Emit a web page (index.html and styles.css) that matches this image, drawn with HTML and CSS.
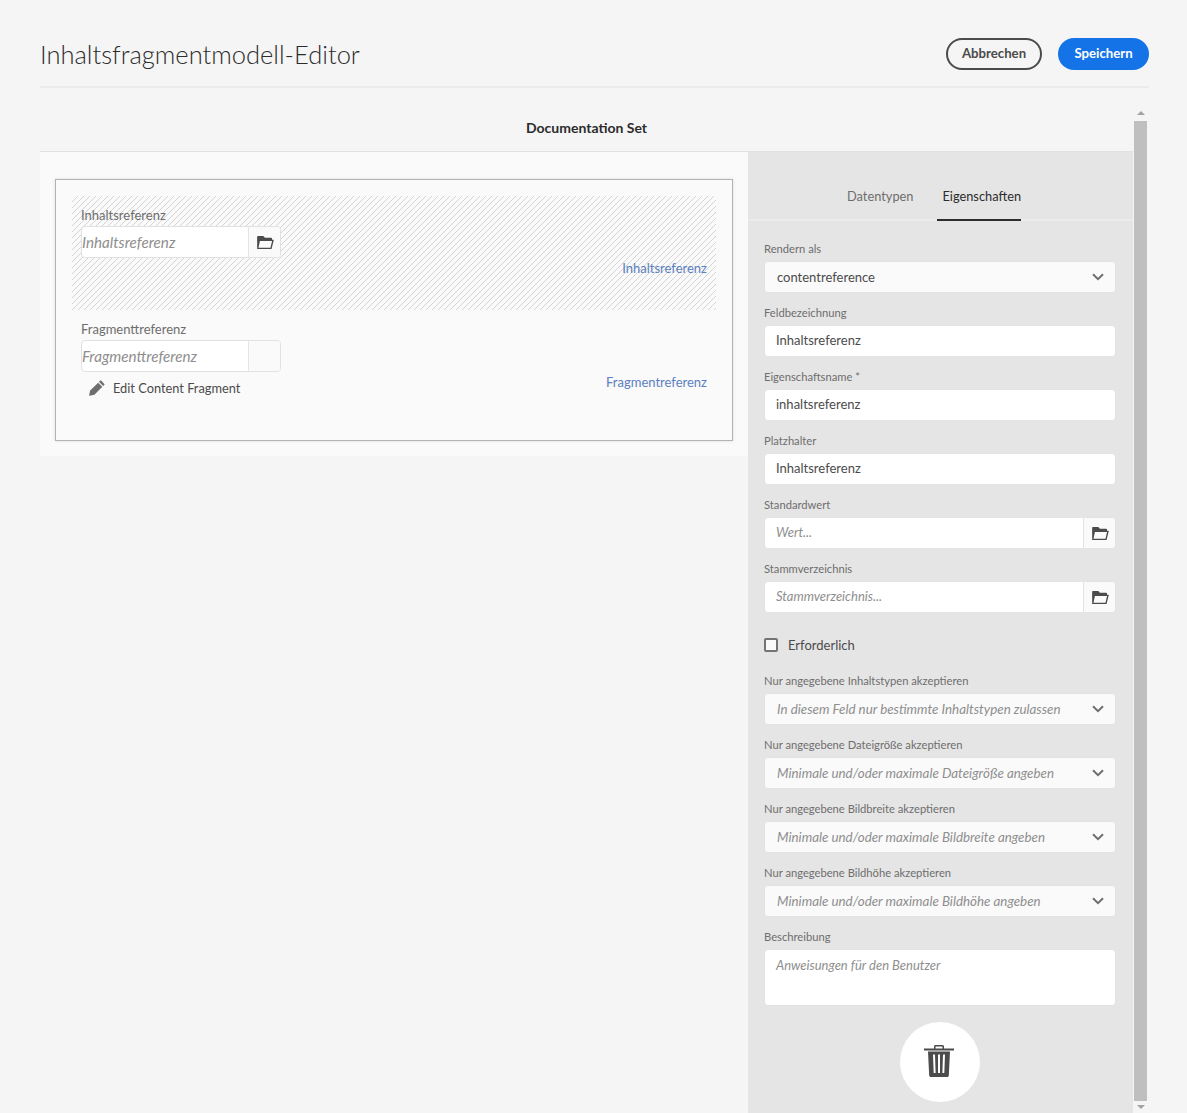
FILE: index.html
```html
<!DOCTYPE html>
<html lang="de">
<head>
    <meta charset="UTF-8">
    <title>Inhaltsfragmentmodell-Editor</title>
    <link rel="stylesheet" href="styles.css">
</head>
<body>
    <svg class="defs" width="0" height="0">
        <symbol id="folder" viewBox="0 0 18 14">
            <path fill="#4b4b4b" d="M0 .8C0 .3.3 0 .8 0h5.400c.3 0 .5.1.7.3L8.400 2H15.200c.5 0 .8.3.8.8V4.500H0z"/>
            <path fill="#4b4b4b" fill-rule="evenodd" d="M0 4h18L15.500 14H0zm3 1.500L1.400 12.600h12.900l1.800-7.100z"/>
        </symbol>
        <symbol id="chevron" viewBox="0 0 12 8">
            <path fill="none" stroke="#6e6e6e" stroke-width="2" d="M1 1.200l5 5 5-5"/>
        </symbol>
    </svg>

    <header class="kopf">
        <h1 class="titel">Inhaltsfragmentmodell-Editor</h1>
        <div class="aktionen">
            <button class="btn btn-abbrechen">Abbrechen</button>
            <button class="btn btn-speichern">Speichern</button>
        </div>
    </header>

    <div class="arbeitsflaeche">
        <main class="inhalt">
            <div class="modellname">Documentation Set</div>
            <div class="spalten">
                <section class="modell">
                    <div class="modell-rahmen">
                        <div class="zeile zeile-aktiv">
                            <div>
                                <label class="zeile-label">Inhaltsreferenz</label>
                                <div class="pfad">
                                    <span class="pfad-text">Inhaltsreferenz</span>
                                    <span class="pfad-btn"><svg width="17" height="13"><use href="#folder"/></svg></span>
                                </div>
                            </div>
                            <a class="zeile-typ">Inhaltsreferenz</a>
                        </div>
                        <div class="zeile">
                            <div>
                                <label class="zeile-label">Fragmenttreferenz</label>
                                <div class="pfad">
                                    <span class="pfad-text">Fragmenttreferenz</span>
                                    <span class="pfad-btn"></span>
                                </div>
                                <div class="bearbeiten">
                                    <svg width="16" height="16" viewBox="0 0 18 18"><path fill="#6e6e6e" d="M13.600.7l3.700 3.700c.3.3.3.7 0 1L15.900 6.800 11.200 2.100 12.600.7c.3-.3.7-.3 1 0zM10.300 3l4.700 4.700-8.900 8.900-5.500 1.200c-.3 0-.5-.2-.5-.5l1.200-5.400z"/></svg>
                                    <span>Edit Content Fragment</span>
                                </div>
                            </div>
                            <a class="zeile-typ">Fragmentreferenz</a>
                        </div>
                    </div>
                </section>

                <aside class="seite">
                    <nav class="tabs">
                        <a class="tab">Datentypen</a>
                        <a class="tab tab-aktiv">Eigenschaften</a>
                    </nav>
                    <form class="felder">
                        <div class="feld">
                            <label>Rendern als</label>
                            <div class="auswahl"><span>contentreference</span><svg width="12" height="8"><use href="#chevron"/></svg></div>
                        </div>
                        <div class="feld">
                            <label>Feldbezeichnung</label>
                            <div class="eingabe">Inhaltsreferenz</div>
                        </div>
                        <div class="feld">
                            <label>Eigenschaftsname *</label>
                            <div class="eingabe">inhaltsreferenz</div>
                        </div>
                        <div class="feld">
                            <label>Platzhalter</label>
                            <div class="eingabe">Inhaltsreferenz</div>
                        </div>
                        <div class="feld">
                            <label>Standardwert</label>
                            <div class="gruppe">
                                <div class="eingabe leer">Wert...</div>
                                <span class="gruppe-btn"><svg width="17" height="13"><use href="#folder"/></svg></span>
                            </div>
                        </div>
                        <div class="feld">
                            <label>Stammverzeichnis</label>
                            <div class="gruppe">
                                <div class="eingabe leer">Stammverzeichnis...</div>
                                <span class="gruppe-btn"><svg width="17" height="13"><use href="#folder"/></svg></span>
                            </div>
                        </div>
                        <div class="haken">
                            <span class="haken-box"></span>
                            <span>Erforderlich</span>
                        </div>
                        <div class="feld">
                            <label>Nur angegebene Inhaltstypen akzeptieren</label>
                            <div class="auswahl leer"><span>In diesem Feld nur bestimmte Inhaltstypen zulassen</span><svg width="12" height="8"><use href="#chevron"/></svg></div>
                        </div>
                        <div class="feld">
                            <label>Nur angegebene Dateigröße akzeptieren</label>
                            <div class="auswahl leer"><span>Minimale und/oder maximale Dateigröße angeben</span><svg width="12" height="8"><use href="#chevron"/></svg></div>
                        </div>
                        <div class="feld">
                            <label>Nur angegebene Bildbreite akzeptieren</label>
                            <div class="auswahl leer"><span>Minimale und/oder maximale Bildbreite angeben</span><svg width="12" height="8"><use href="#chevron"/></svg></div>
                        </div>
                        <div class="feld">
                            <label>Nur angegebene Bildhöhe akzeptieren</label>
                            <div class="auswahl leer"><span>Minimale und/oder maximale Bildhöhe angeben</span><svg width="12" height="8"><use href="#chevron"/></svg></div>
                        </div>
                        <div class="feld">
                            <label>Beschreibung</label>
                            <div class="eingabe leer mehrzeilig">Anweisungen für den Benutzer</div>
                        </div>
                        <div class="loeschen">
                            <span class="loeschen-btn">
                                <svg width="30" height="32" viewBox="0 0 30 32">
                                    <path fill="#4b4b4b" d="M10 1.500C10 .7 10.700 0 11.500 0h7c.8 0 1.500.7 1.500 1.500V3.500h10v2H0v-2h10zm1.500 0v2h7v-2z"/>
                                    <path fill="#4b4b4b" fill-rule="evenodd" d="M4 6.500h22L24.800 30.500c-.1.8-.7 1.500-1.500 1.500H6.700c-.8 0-1.400-.7-1.500-1.500zM9 9.500l.7 18.500h1.900L11 9.500zm5 0V28h2V9.500zm5 0L18.400 28h1.900L21 9.500z"/>
                                </svg>
                            </span>
                        </div>
                    </form>
                </aside>
            </div>
        </main>

        <div class="rollbalken">
            <span class="pfeil-hoch"></span>
            <span class="griff"></span>
            <span class="pfeil-runter"></span>
        </div>
    </div>
</body>
</html>
```

FILE: styles.css
```css
* {
    box-sizing: border-box;
}

html, body {
    height: 100%;
}

body {
    margin: 0;
    height: 1113px;
    overflow: hidden;
    display: flex;
    flex-direction: column;
    padding: 0 38px 0 40px;
    background-color: #f5f5f5;
    color: #4b4b4b;
    font-family: Lato, "Open Sans", sans-serif;
    font-size: 13px;
}

.defs {
    position: absolute;
}

.kopf {
    flex: none;
    height: 88px;
    display: flex;
    justify-content: space-between;
    align-items: center;
    padding-top: 37px;
    padding-bottom: 15px;
    border-bottom: 2px solid #ebebeb;
}

.titel {
    margin: 0;
    font-size: 25.500px;
    font-weight: 300;
    color: #2c2c2c;
}

.aktionen {
    display: flex;
    gap: 16px;
}

.btn {
    height: 32px;
    padding: 0 0 2px;
    border-radius: 16px;
    font-family: inherit;
    font-size: 13.200px;
    font-weight: 700;
}

.btn-abbrechen {
    width: 96px;
    border: 2px solid #4b4b4b;
    background: none;
    color: #4b4b4b;
}

.btn-speichern {
    width: 91px;
    border: 0;
    background-color: #1473e6;
    color: #fff;
}

.arbeitsflaeche {
    flex: 1;
    min-height: 0;
    display: flex;
    padding-top: 17px;
}

.inhalt {
    flex: 1;
    display: flex;
    flex-direction: column;
}

.modellname {
    flex: none;
    height: 47px;
    display: flex;
    align-items: center;
    justify-content: center;
    padding-bottom: 1px;
    border-bottom: 1px solid #e1e1e1;
    font-weight: 700;
    font-size: 14px;
    color: #2c2c2c;
}

.spalten {
    flex: 1;
    display: flex;
    align-items: flex-start;
}

.modell {
    width: 708px;
    padding: 27px 15px 15px;
    background-color: #fafafa;
}

.modell-rahmen {
    height: 262px;
    padding: 16px;
    border: 1px solid #b3b3b3;
    box-shadow: 0 0 3px rgba(0, 0, 0, .12);
}

.zeile {
    display: flex;
    justify-content: space-between;
    padding: 9px 9px 0;
    height: 114px;
}

.zeile-aktiv {
    background-image: linear-gradient(135deg, #d4d4d4 6%, transparent 6%, transparent 50%, #d4d4d4 50%, #d4d4d4 56%, transparent 56%);
    background-size: 6px 6px;
}

.zeile-label {
    display: block;
    line-height: 20px;
    margin-bottom: 1px;
    color: #6e6e6e;
    font-size: 13px;
}

.pfad {
    display: flex;
    width: 200px;
    height: 32px;
    border: 1px solid #e1e1e1;
    border-radius: 4px;
    background-color: #fff;
}

.pfad-text {
    flex: 1;
    line-height: 30px;
    font-size: 15.200px;
    font-style: italic;
    color: #8e8e8e;
}

.pfad-btn {
    flex: none;
    width: 32px;
    display: flex;
    align-items: center;
    justify-content: center;
    padding-left: 2px;
    border-left: 1px solid #e5e5e5;
    border-radius: 0 3px 3px 0;
    background-color: #fafafa;
}

.zeile-typ {
    margin-top: 54px;
    line-height: 18px;
    color: #5a80c0;
    font-size: 13px;
}

.bearbeiten {
    display: flex;
    align-items: center;
    gap: 8px;
    margin: 7px 0 0 8px;
    line-height: 18px;
    font-size: 12.800px;
}

.seite {
    width: 385px;
    align-self: stretch;
    background-color: #e5e5e5;
}

.tabs {
    height: 69px;
    display: flex;
    gap: 24px;
    padding: 28px 0 0 94px;
    border-bottom: 2px solid #ebebeb;
}

.tab {
    height: 41px;
    padding: 8px 0 0 5px;
    color: #6e6e6e;
    font-size: 12.800px;
}

.tab-aktiv {
    border-bottom: 2px solid #2c2c2c;
    color: #2c2c2c;
}

.felder {
    padding: 19px 17px 0 16px;
}

.feld {
    margin-bottom: 11px;
}

.feld label {
    display: block;
    height: 21px;
    line-height: 18px;
    font-size: 11.200px;
    color: #6e6e6e;
}

.eingabe {
    flex: 1;
    height: 32px;
    padding: 0 11px;
    line-height: 29px;
    border: 1px solid #e3e3e3;
    border-radius: 4px;
    background-color: #fff;
    font-size: 13px;
}

.leer {
    font-style: italic;
    color: #8e8e8e;
}

.mehrzeilig {
    height: 57px;
    line-height: 30px;
}

.auswahl {
    height: 32px;
    display: flex;
    align-items: center;
    justify-content: space-between;
    padding: 0 11px 1px 12px;
    border: 1px solid #e3e3e3;
    border-radius: 4px;
    background-color: #fafafa;
    font-size: 13px;
}

.auswahl.leer {
    font-size: 13.350px;
}

.auswahl svg {
    margin-top: 1px;
}

.gruppe {
    display: flex;
}

.gruppe .eingabe {
    border-radius: 4px 0 0 4px;
}

.gruppe-btn {
    flex: none;
    width: 32px;
    display: flex;
    align-items: center;
    justify-content: center;
    padding-left: 1px;
    border: 1px solid #e3e3e3;
    border-left: 0;
    border-radius: 0 4px 4px 0;
    background-color: #fafafa;
}

.haken {
    display: flex;
    align-items: center;
    gap: 10px;
    height: 32px;
    margin: 16px 0 11px;
    font-size: 13px;
}

.haken-box {
    width: 14px;
    height: 14px;
    border: 2px solid #747474;
    border-radius: 2px;
    background-color: #fafafa;
}

.loeschen {
    display: flex;
    justify-content: center;
    margin-top: 16px;
}

.loeschen-btn {
    width: 80px;
    height: 80px;
    display: flex;
    align-items: center;
    justify-content: center;
    padding: 0 2px 2px 0;
    border-radius: 50%;
    background-color: #fff;
}

.rollbalken {
    flex: none;
    width: 16px;
    display: flex;
    flex-direction: column;
    padding-left: 1px;
    background-color: #f5f5f5;
}

.griff {
    flex: 1;
    width: 13px;
    background-color: #bfbfbf;
}

.pfeil-hoch, .pfeil-runter {
    flex: none;
    width: 13px;
    height: 16px;
    display: flex;
    align-items: center;
    justify-content: center;
}

.pfeil-hoch::before, .pfeil-runter::before {
    content: "";
    border-left: 4px solid transparent;
    border-right: 4px solid transparent;
}

.pfeil-hoch::before {
    border-bottom: 4px solid #a3a3a3;
}

.pfeil-runter {
    height: 12px;
}

.pfeil-runter::before {
    border-top: 4px solid #a3a3a3;
}
```
